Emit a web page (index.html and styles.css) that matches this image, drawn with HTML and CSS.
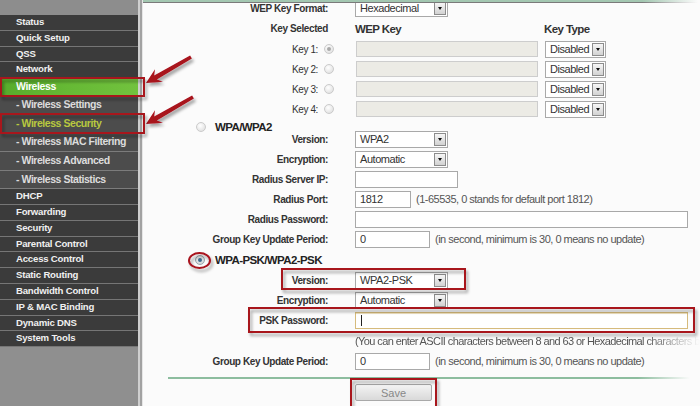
FILE: index.html
```html
<!DOCTYPE html>
<html lang="en">
<head>
    <meta charset="UTF-8">
    <title>Wireless Security</title>
    <link rel="stylesheet" href="styles.css">
</head>
<body>
<div class="page">
    <!-- Left menu -->
    <nav class="menu">
        <div class="menu-top"></div>
        <a class="item">Status</a>
        <a class="item">Quick Setup</a>
        <a class="item">QSS</a>
        <a class="item">Network</a>
        <a class="item active">Wireless</a>
        <a class="sub">- Wireless Settings</a>
        <a class="sub current">- Wireless Security</a>
        <a class="sub">- Wireless MAC Filtering</a>
        <a class="sub">- Wireless Advanced</a>
        <a class="sub">- Wireless Statistics</a>
        <a class="item">DHCP</a>
        <a class="item">Forwarding</a>
        <a class="item">Security</a>
        <a class="item">Parental Control</a>
        <a class="item">Access Control</a>
        <a class="item">Static Routing</a>
        <a class="item">Bandwidth Control</a>
        <a class="item">IP &amp; MAC Binding</a>
        <a class="item">Dynamic DNS</a>
        <a class="item">System Tools</a>
        <div class="menu-rest"></div>
    </nav>
    <div class="divider"></div>

    <!-- Security settings -->
    <main class="content">
        <div class="form">
            <div class="row">
                <div class="label">WEP Key Format:</div>
                <span class="select w93">Hexadecimal<span class="btn"></span></span>
            </div>
            <div class="row heads">
                <div class="label">Key Selected</div>
                <div class="col-key">WEP Key</div>
                <div class="col-type">Key Type</div>
            </div>
            <div class="row">
                <div class="label keyno">Key 1: <span class="radio on"></span></div>
                <span class="input off wkey"></span>
                <span class="select wtype">Disabled<span class="btn"></span></span>
            </div>
            <div class="row">
                <div class="label keyno">Key 2: <span class="radio"></span></div>
                <span class="input off wkey"></span>
                <span class="select wtype">Disabled<span class="btn"></span></span>
            </div>
            <div class="row">
                <div class="label keyno">Key 3: <span class="radio"></span></div>
                <span class="input off wkey"></span>
                <span class="select wtype">Disabled<span class="btn"></span></span>
            </div>
            <div class="row">
                <div class="label keyno">Key 4: <span class="radio"></span></div>
                <span class="input off wkey"></span>
                <span class="select wtype">Disabled<span class="btn"></span></span>
            </div>

            <div class="row sect wpa">
                <span class="radio"></span><b>WPA/WPA2</b>
            </div>
            <div class="row">
                <div class="label">Version:</div>
                <span class="select w93">WPA2<span class="btn"></span></span>
            </div>
            <div class="row">
                <div class="label">Encryption:</div>
                <span class="select w93">Automatic<span class="btn"></span></span>
            </div>
            <div class="row">
                <div class="label">Radius Server IP:</div>
                <span class="input w103"></span>
            </div>
            <div class="row">
                <div class="label">Radius Port:</div>
                <span class="input w56">1812</span>
                <span class="hint">(1-65535, 0 stands for default port 1812)</span>
            </div>
            <div class="row">
                <div class="label">Radius Password:</div>
                <span class="input wide"></span>
            </div>
            <div class="row">
                <div class="label">Group Key Update Period:</div>
                <span class="input w75">0</span>
                <span class="hint">(in second, minimum is 30, 0 means no update)</span>
            </div>

            <div class="row sect psk">
                <span class="radio on blue"></span><b>WPA-PSK/WPA2-PSK</b>
            </div>
            <div class="row">
                <div class="label">Version:</div>
                <span class="select w93">WPA2-PSK<span class="btn"></span></span>
            </div>
            <div class="row">
                <div class="label">Encryption:</div>
                <span class="select w93">Automatic<span class="btn"></span></span>
            </div>
            <div class="row">
                <div class="label">PSK Password:</div>
                <span class="input wide focus"><span class="caret"></span></span>
            </div>
            <div class="row help">
                <span class="hint">(You can enter ASCII characters between 8 and 63 or Hexadecimal characters between 8 and 64.)</span>
            </div>
            <div class="row">
                <div class="label">Group Key Update Period:</div>
                <span class="input w75">0</span>
                <span class="hint">(in second, minimum is 30, 0 means no update)</span>
            </div>
        </div>

        <div class="rule"></div>
        <div class="actions">
            <button class="save">Save</button>
        </div>
    </main>
</div>

<!-- Annotations drawn over the page -->
<svg class="marks" width="700" height="406" viewBox="0 0 700 406">
    <defs>
        <filter id="shade" x="-20%" y="-20%" width="140%" height="160%">
            <feDropShadow dx="2" dy="3" stdDeviation="1.4" flood-color="#000" flood-opacity="0.35"/>
        </filter>
        <linearGradient id="topFade" x1="0" x2="1" y1="0" y2="0">
            <stop offset="0.9" stop-color="#a3c7b1"/>
            <stop offset="1" stop-color="#a3c7b1" stop-opacity="0"/>
        </linearGradient>
        <linearGradient id="topDark" x1="0" x2="1" y1="0" y2="0">
            <stop offset="0.9" stop-color="#7a7a7a"/>
            <stop offset="1" stop-color="#7a7a7a" stop-opacity="0"/>
        </linearGradient>
    </defs>
    <rect x="143" y="0" width="555" height="2" fill="url(#topFade)"/>
    <rect x="143" y="2" width="555" height="1" fill="url(#topDark)"/>

    <g fill="#a8121d" filter="url(#shade)">
        <polygon points="146,83 163,81.8 156.8,79.6 191.9,58.4 190.1,55.6 154.2,75.4 155,69.2"/>
        <polygon points="146,124 163,122.8 156.8,120.6 193.9,98.4 192.1,95.6 154.2,116.4 155,110.2"/>
    </g>
    <g fill="none" stroke="#a8121d" stroke-width="2" filter="url(#shade)">
        <rect x="1" y="78" width="143" height="18"/>
        <rect x="1" y="114" width="143" height="19"/>
        <ellipse cx="199.5" cy="260.5" rx="10.5" ry="7.5"/>
        <rect x="282" y="269" width="183" height="20"/>
        <rect x="249" y="308" width="445" height="24"/>
        <rect x="351" y="379" width="85" height="30"/>
    </g>
</svg>
</body>
</html>
```

FILE: styles.css
```css
body {
    margin: 0;
    width: 700px;
    height: 406px;
    overflow: hidden;
    background: #fbfbfb;
    font-family: "Liberation Sans", Arial, sans-serif;
    color: #333;
    position: relative;
}

.page {
    display: flex;
    height: 406px;
}

/* Menu */
.menu {
    width: 138px;
    flex-shrink: 0;
    display: flex;
    flex-direction: column;
    background: #8f8f8f;
}

.menu-top {
    height: 15px;
    background: #8d8d8d;
}

.menu a {
    display: block;
    box-sizing: border-box;
    padding-left: 16px;
    white-space: nowrap;
}

.menu .item {
    height: 15.8px;
    background: #3b3b3b;
    border-bottom: 1px solid #767676;
    color: #f0f0f0;
    font: bold 9.6px/14.8px "Liberation Sans", Arial, sans-serif;
    letter-spacing: -0.2px;
}

.menu .item.active {
    height: 18px;
    line-height: 17px;
    font-size: 10.5px;
    letter-spacing: -0.4px;
    color: #fff;
    background: linear-gradient(to right, #3d8a1c 0, #58ac2c 4px, #66b935 50%, #72c23e 100%);
}

.menu .sub {
    height: 18.6px;
    background: #4c4c4c;
    border-bottom: 1px solid #7c7c7c;
    color: #dcdcdc;
    font: bold 10.5px/17.6px "Liberation Sans", Arial, sans-serif;
    letter-spacing: -0.45px;
}

.menu .sub.current {
    color: #b9c93f;
}

.menu-rest {
    flex: 1;
}

.divider {
    width: 5px;
    flex-shrink: 0;
    background: linear-gradient(to right, #cfcfcf 0, #cfcfcf 2px, #a2a2a2 2px, #a2a2a2 4px, #e6e6e6 4px);
}

/* Form */
.content {
    flex: 1;
    min-width: 0;
}

.form {
    margin-top: -2px;
}

.row {
    display: flex;
    align-items: center;
    height: 20px;
    white-space: nowrap;
}

.label {
    width: 185px;
    padding-right: 27px;
    flex-shrink: 0;
    text-align: right;
    font-size: 10px;
    font-weight: bold;
    letter-spacing: -0.4px;
    color: #333;
}

.label.keyno {
    width: 191px;
    padding-right: 21px;
    display: flex;
    justify-content: flex-end;
    align-items: center;
    gap: 6px;
    font-weight: normal;
}

.heads {
    height: 21px;
}

.col-key,
.col-type {
    font-size: 11.5px;
    font-weight: bold;
    letter-spacing: -0.6px;
    color: #333;
}

.col-key {
    width: 189px;
}

.select,
.input {
    display: inline-flex;
    align-items: center;
    box-sizing: border-box;
    height: 17px;
    border: 1px solid #a9a9a9;
    background: #fff;
    font-size: 11px;
    letter-spacing: -0.45px;
    color: #333;
    padding-left: 4px;
    flex-shrink: 0;
}

.select {
    justify-content: space-between;
}

.select .btn {
    display: flex;
    align-items: center;
    justify-content: center;
    box-sizing: border-box;
    width: 12px;
    height: 13px;
    margin-right: 1px;
    border: 1px solid #8c8c8c;
    background: linear-gradient(#f6f6f6, #d2d2d2);
}

.select .btn::after {
    content: "";
    border-left: 2.5px solid transparent;
    border-right: 2.5px solid transparent;
    border-top: 3px solid #111;
}

.w93 { width: 93px; }
.wtype { width: 61px; margin-left: 7px; }
.wkey { width: 182px; height: 16px; margin-left: 1px; }
.w103 { width: 103px; }
.w56 { width: 56px; }
.w75 { width: 75px; }
.wide { width: 333px; }

.input.off {
    background: #ecebe5;
    border-color: #cdcdcd;
}

.input.focus {
    border-color: #d6bb7c;
    box-shadow: inset 0 1px 0 #efe2bf;
}

.caret {
    width: 1px;
    height: 11px;
    background: #222;
    margin-left: 1px;
}

.hint {
    margin-left: 5px;
    font-size: 11px;
    letter-spacing: -0.5px;
    color: #555;
}

.help {
    height: 21px;
    padding-left: 212px;
    overflow: hidden;
    -webkit-mask-image: linear-gradient(to right, #000 90%, transparent 100%);
}

.help .hint {
    margin-left: 0;
    letter-spacing: -0.6px;
}

/* Radio buttons */
.radio {
    display: inline-flex;
    align-items: center;
    justify-content: center;
    box-sizing: border-box;
    width: 10px;
    height: 10px;
    border-radius: 50%;
    border: 1px solid #cbcbcb;
    background: radial-gradient(circle at 40% 35%, #ffffff, #dadada);
    flex-shrink: 0;
}

.radio.on::after {
    content: "";
    width: 4px;
    height: 4px;
    border-radius: 50%;
    background: #a9a9a9;
}

.radio.blue {
    border-color: #9aa4ac;
    background: radial-gradient(circle at 40% 35%, #f4f4f4, #c6cacd);
}

.radio.blue::after {
    background: #3d6b8e;
}

.sect {
    padding-left: 53px;
    gap: 9px;
    font-size: 11.5px;
    letter-spacing: -0.6px;
    color: #222;
}

.sect.wpa {
    height: 16px;
    margin-bottom: -6px;
}

.sect.psk {
    height: 21px;
    padding-left: 52px;
    gap: 10px;
}

/* Bottom */
.rule {
    margin: 6px 10px 0 25px;
    height: 2px;
    background: linear-gradient(to right, #8dbd9f 90%, rgba(141, 189, 159, 0));
}

.actions {
    padding-left: 212px;
    margin-top: 5px;
}

.save {
    display: block;
    width: 77px;
    height: 17px;
    padding: 0;
    border: 1px solid #a8a8a8;
    border-radius: 2px;
    background: linear-gradient(#f3f3f3, #d9d9d9);
    font-family: "Liberation Sans", Arial, sans-serif;
    font-size: 11px;
    color: #888;
}

.marks {
    position: absolute;
    left: 0;
    top: 0;
    pointer-events: none;
}
```
